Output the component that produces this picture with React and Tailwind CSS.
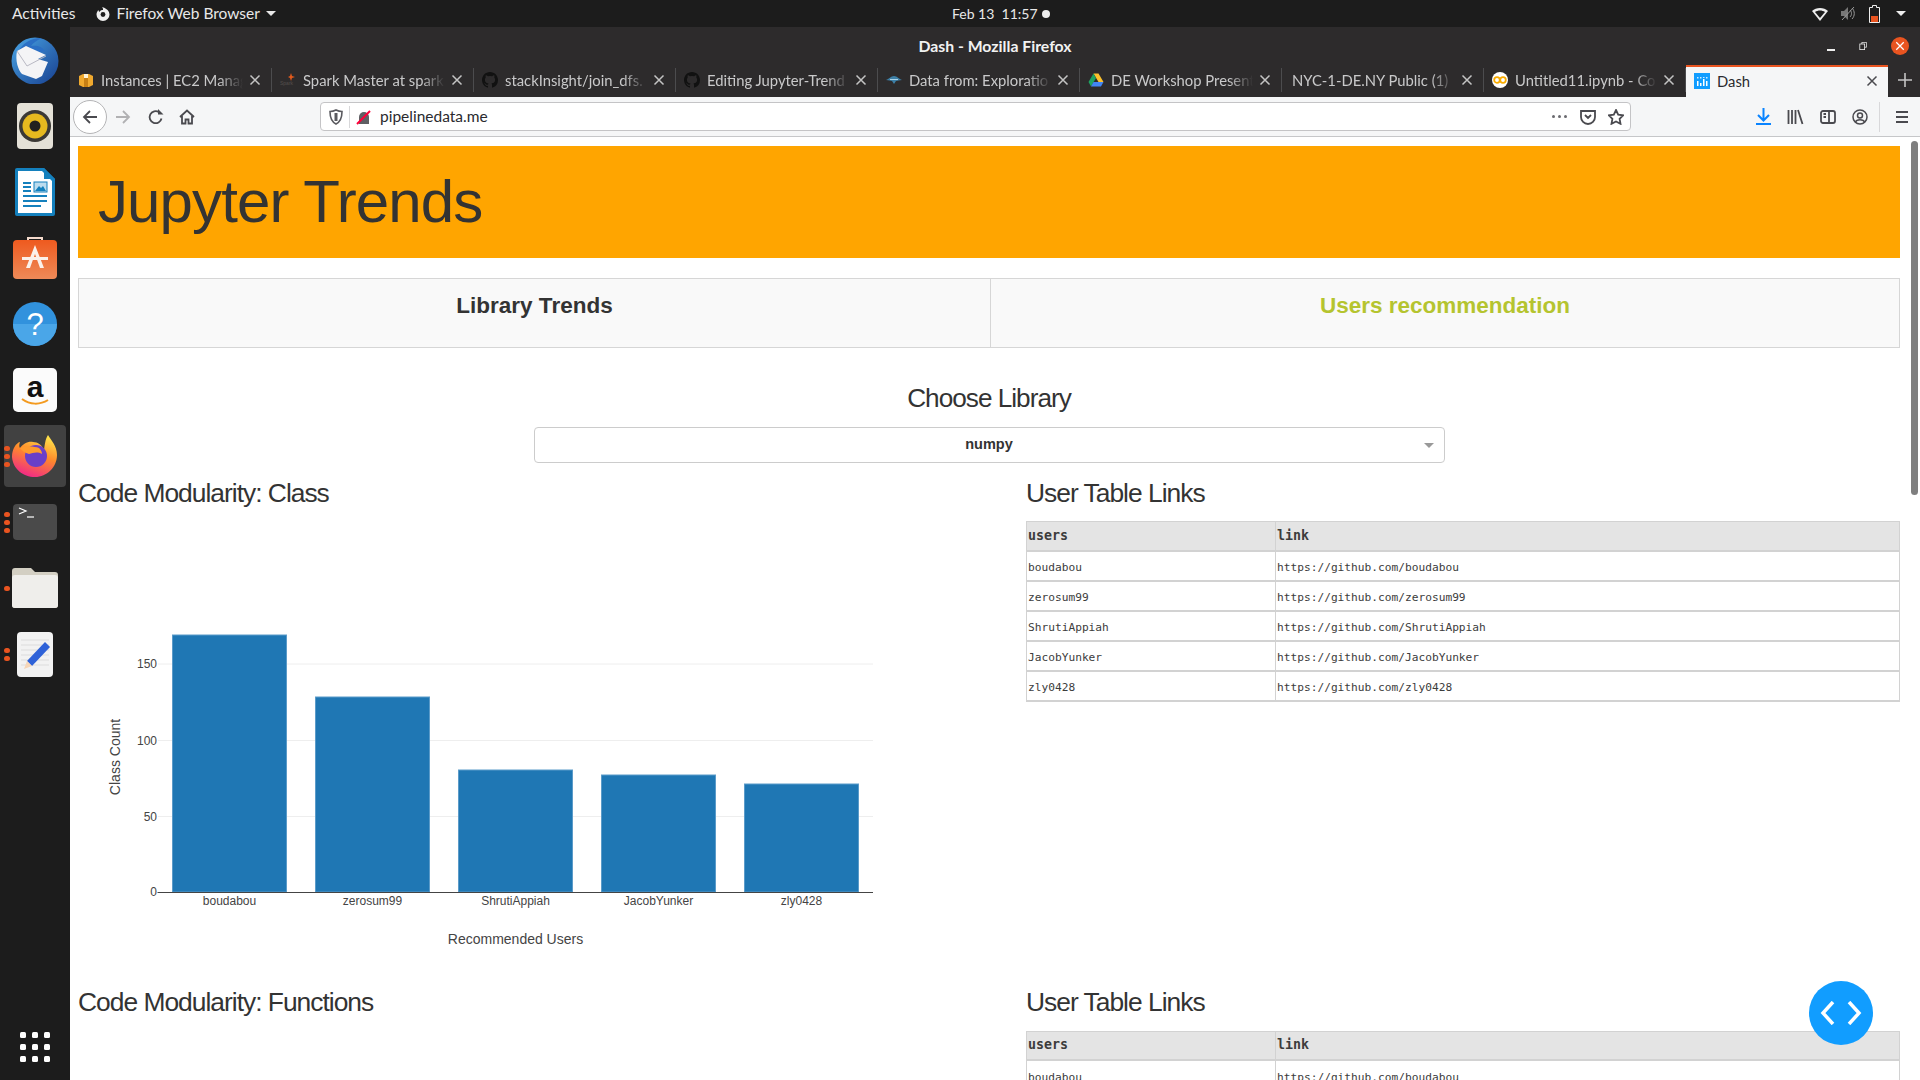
const tabs = [
  { title: 'Instances | EC2 Manag', icon: 'aws' },
  { title: 'Spark Master at spark', icon: 'spark' },
  { title: 'stackInsight/join_dfs.', icon: 'github' },
  { title: 'Editing Jupyter-Trend', icon: 'github' },
  { title: 'Data from: Exploratio', icon: 'manta' },
  { title: 'DE Workshop Present', icon: 'drive' },
  { title: 'NYC-1-DE.NY Public (1)', icon: null },
  { title: 'Untitled11.ipynb - Co', icon: 'colab' },
];

const users = ['boudabou', 'zerosum99', 'ShrutiAppiah', 'JacobYunker', 'zly0428'];

const bars = [
  { name: 'boudabou', x: 172, top: 635 },
  { name: 'zerosum99', x: 315, top: 697 },
  { name: 'ShrutiAppiah', x: 458, top: 770 },
  { name: 'JacobYunker', x: 601, top: 775 },
  { name: 'zly0428', x: 744, top: 784 },
];

function TabIcon({ type }) {
  if (type === 'aws') {
    return (
      <svg width="16" height="16" viewBox="0 0 16 16">
        <path d="M1 4 5 2h6l4 2v9l-4 2H5l-4-2z" fill="#f0a92e" />
        <path d="M6 2h4v4H6z" fill="#fff3d6" />
        <path d="M6 6h4v9H6z" fill="#c77f14" />
      </svg>
    );
  }
  if (type === 'spark') {
    return (
      <svg width="16" height="16" viewBox="0 0 16 16">
        <text x="0" y="13" fontSize="5" fontFamily="Liberation Sans" fill="#55504c">
          Spark
        </text>
        <path d="M11 1l1 3 3 1-3 1-1 3-1-3-2-1 2-1z" fill="#e25a1c" />
      </svg>
    );
  }
  if (type === 'github') {
    return (
      <svg width="16" height="16" viewBox="0 0 16 16">
        <path
          fill="#111"
          d="M8 0C3.58 0 0 3.58 0 8c0 3.54 2.29 6.53 5.47 7.59.4.07.55-.17.55-.38v-1.34c-2.22.48-2.69-1.07-2.69-1.07-.36-.92-.89-1.17-.89-1.17-.73-.5.05-.49.05-.49.8.06 1.23.82 1.23.82.71 1.22 1.87.87 2.33.66.07-.52.28-.87.5-1.07-1.77-.2-3.64-.89-3.64-3.95 0-.87.31-1.59.82-2.15-.08-.2-.36-1.02.08-2.12 0 0 .67-.21 2.2.82a7.6 7.6 0 0 1 4 0c1.53-1.04 2.2-.82 2.2-.82.44 1.1.16 1.92.08 2.12.51.56.82 1.27.82 2.15 0 3.07-1.87 3.75-3.65 3.95.29.25.54.73.54 1.48v2.2c0 .21.15.46.55.38A8.01 8.01 0 0 0 16 8c0-4.42-3.58-8-8-8z"
        />
      </svg>
    );
  }
  if (type === 'manta') {
    return (
      <svg width="16" height="16" viewBox="0 0 16 16">
        <path d="M0 8c3-1 5-4 8-4s5 3 8 4c-3 0-4 1-6 1l-2 3-2-3C4 9 3 8 0 8z" fill="#3d7fa6" />
        <path d="M4 7h8v1H4z" fill="#a9d3ea" />
      </svg>
    );
  }
  if (type === 'drive') {
    return (
      <svg width="16" height="16" viewBox="0 0 16 16">
        <path d="M5.500 1.500h5L15.500 10h-5z" fill="#fbc02d" />
        <path d="M5.500 1.500 0.500 10 3 14.500 8 6z" fill="#1ea362" />
        <path d="M3 14.500h10l2.500-4.500h-10z" fill="#4285f4" />
      </svg>
    );
  }
  if (type === 'colab') {
    return (
      <svg width="16" height="16" viewBox="0 0 16 16">
        <circle cx="8" cy="8" r="8" fill="#fff" />
        <circle cx="5" cy="8" r="2.800" fill="none" stroke="#f9ab00" strokeWidth="1.800" />
        <circle cx="11" cy="8" r="2.800" fill="none" stroke="#f9ab00" strokeWidth="1.800" />
      </svg>
    );
  }
  return (
    <svg width="16" height="16" viewBox="0 0 16 16">
      <rect width="16" height="16" fill="#119dff" />
      <path d="M3 8h1.500v5H3zM6 10h1.500v3H6zM9 6h1.500v7H9zM12 8h1.500v5H12z" fill="#fff" />
      <path d="M3 4h1.500v1.500H3zM6 4h1.500v1.500H6zM9 4h1.500v1H9zM12 4h1.500v1.500H12z" fill="#cfeaff" />
    </svg>
  );
}

function CloseX({ className = 'stroke-[#c4c4c4]' }) {
  return (
    <svg width="12" height="12" viewBox="0 0 12 12" className={className} strokeWidth="1.500" fill="none">
      <path d="M1.500 1.500l9 9M10.500 1.500l-9 9" />
    </svg>
  );
}

function BrowserTab({ title, icon }) {
  return (
    <div className="flex h-[24px] w-[202px] shrink-0 items-center border-r border-[#4c4c4e] pl-[8px] pr-[10px]">
      {icon ? (
        <span className="mr-[7px] flex w-[16px] shrink-0 items-center justify-center">
          <TabIcon type={icon} />
        </span>
      ) : (
        <span className="w-[2px] shrink-0" />
      )}
      <span className="flex-1 overflow-hidden whitespace-nowrap text-[14.800px] text-[#c9c9ca] [mask-image:linear-gradient(to_left,transparent,black_24px)]">
        {title}
      </span>
      <span className="ml-[6px]">
        <CloseX />
      </span>
    </div>
  );
}

function DockItem({ children, active, dots = 0 }) {
  return (
    <div className="relative flex h-[66px] shrink-0 items-center justify-center">
      {active ? <span className="absolute inset-x-[4px] inset-y-[2px] rounded-[4px] bg-[#414141]" /> : null}
      {dots > 0 ? (
        <span className="absolute left-[4px] flex flex-col gap-[3px]">
          {Array.from({ length: dots }).map((_, i) => (
            <span className="h-[5px] w-[6px] rounded-full bg-[#e95420]" key={i} />
          ))}
        </span>
      ) : null}
      <span className="relative flex">{children}</span>
    </div>
  );
}

function Dock() {
  return (
    <aside className="flex w-[70px] shrink-0 flex-col bg-[#1c1c1c]">
      <DockItem>
        <svg width="50" height="48" viewBox="0 0 50 48">
          <defs>
            <linearGradient id="tb" x1="0" y1="0" x2="1" y2="1">
              <stop offset="0" stopColor="#4aa6e6" />
              <stop offset="1" stopColor="#173f8f" />
            </linearGradient>
          </defs>
          <circle cx="25" cy="25" r="23.500" fill="url(#tb)" />
          <path d="M8 16c4-8 12-14 24-14-5 2-9 5-11 8 5-1 11 0 14 5L12 20z" fill="#2b6fc4" />
          <path d="M7 15l9-5 20 9-8 4 10 3-6 14-6 3-14-5C8 34 5 24 7 15z" fill="#f4f4f6" />
          <path d="M7 15l10 15 19-10" fill="none" stroke="#b9b9c4" strokeWidth="1" />
        </svg>
      </DockItem>
      <DockItem>
        <svg width="36" height="46" viewBox="0 0 36 46">
          <rect width="36" height="46" rx="4" fill="#e4e1d7" />
          <circle cx="18" cy="23" r="16" fill="#3b3935" />
          <circle cx="18" cy="23" r="12.500" fill="#e6b91f" />
          <circle cx="18" cy="23" r="5.500" fill="#22211f" />
        </svg>
      </DockItem>
      <DockItem>
        <svg width="40" height="48" viewBox="0 0 40 48">
          <path d="M2 0h27l11 11v35a2 2 0 0 1-2 2H2a2 2 0 0 1-2-2V2a2 2 0 0 1 2-2z" fill="#1480bd" />
          <path d="M3 3h24l10 10v32H3z" fill="#fff" />
          <path d="M29 0l11 11H29z" fill="#1480bd" />
          <path d="M8 14h8v2H8zM8 18h8v2H8zM8 22h8v2H8zM8 27h24v2H8zM8 32h24v2H8zM8 37h18v2H8z" fill="#1480bd" />
          <rect x="19" y="14" width="13" height="10" fill="#bcdcee" stroke="#1480bd" />
          <path d="M20 23l4-5 2 2 2-2 3 5z" fill="#1480bd" />
        </svg>
      </DockItem>
      <DockItem>
        <svg width="44" height="44" viewBox="0 0 44 44">
          <defs>
            <linearGradient id="sw" x1="0" y1="0" x2="0" y2="1">
              <stop offset="0" stopColor="#ee5a1f" />
              <stop offset="1" stopColor="#ee8a58" />
            </linearGradient>
          </defs>
          <path d="M15 6V2h14v4" fill="none" stroke="#f3d9cb" strokeWidth="2" />
          <rect y="4" width="44" height="39" rx="4" fill="url(#sw)" />
          <path d="M22 9l9 23h-4l-5-14-5 14h-4z" fill="#fbf1ea" />
          <path d="M9 21h26v3H9z" fill="#fbf1ea" />
        </svg>
      </DockItem>
      <DockItem>
        <svg width="44" height="44" viewBox="0 0 44 44">
          <circle cx="22" cy="22" r="22" fill="#3192dd" />
          <path d="M0 22a22 22 0 0 0 44 0z" fill="#4aa6e8" />
          <text x="22" y="33" textAnchor="middle" fontSize="31" fontFamily="Liberation Sans" fill="#fff">
            ?
          </text>
        </svg>
      </DockItem>
      <DockItem>
        <svg width="44" height="44" viewBox="0 0 44 44">
          <rect width="44" height="44" rx="5" fill="#fbfbfb" />
          <text x="22" y="29" textAnchor="middle" fontSize="30" fontWeight="700" fontFamily="Liberation Sans" fill="#111">
            a
          </text>
          <path d="M9 31c8 6 18 6 26 1" fill="none" stroke="#f39a1f" strokeWidth="2" />
        </svg>
      </DockItem>
      <DockItem active dots={3}>
        <svg width="46" height="44" viewBox="0 0 46 44">
          <defs>
            <linearGradient id="ff" x1="0.7" y1="0" x2="0.3" y2="1">
              <stop offset="0" stopColor="#ffe34a" />
              <stop offset="0.45" stopColor="#ff8a2b" />
              <stop offset="1" stopColor="#f0258a" />
            </linearGradient>
          </defs>
          <path d="M36 1c3 5 9 11 9 20 0 12-10 22-22 22S1 35 0 23C0 15 4 9 8 8c-1 3-1 5 0 6 3-4 8-7 13-6 5 0 9 3 11 8 1-6 1-10 4-15z" fill="url(#ff)" />
          <circle cx="24" cy="22" r="11" fill="#6a3fc9" />
          <path d="M8 14c5-2 14-2 19 0 2 2 3 4 3 6-5-3-9-1-13 0-4-1-7-3-9-6z" fill="#ff9b2e" />
        </svg>
      </DockItem>
      <DockItem dots={3}>
        <svg width="44" height="36" viewBox="0 0 44 36">
          <rect width="44" height="36" rx="4" fill="#4a4a4a" />
          <path d="M6 4l7 3-7 3" fill="none" stroke="#fff" strokeWidth="1.200" />
          <path d="M14 13h7" stroke="#fff" strokeWidth="1.200" />
        </svg>
      </DockItem>
      <DockItem dots={1}>
        <svg width="46" height="40" viewBox="0 0 46 40">
          <path d="M3 0h16l4 4h20a3 3 0 0 1 3 3v30a3 3 0 0 1-3 3H3a3 3 0 0 1-3-3V3a3 3 0 0 1 3-3z" fill="#d3cfc3" />
          <path d="M3 7h40a3 3 0 0 1 3 3v27a3 3 0 0 1-3 3H3a3 3 0 0 1-3-3V10a3 3 0 0 1 3-3z" fill="#efeeeb" />
        </svg>
      </DockItem>
      <DockItem dots={2}>
        <svg width="36" height="45" viewBox="0 0 36 45">
          <rect width="36" height="45" rx="4" fill="#f2f2f2" />
          <path d="M4 8h28M4 13h28M4 18h28M4 23h28M4 28h28M4 33h28" stroke="#dcdcdc" />
          <path d="M10 29 28 10l5 5-18 19z" fill="#2f62d8" />
          <path d="M10 29l5 5-8 3z" fill="#f6d6b8" />
        </svg>
      </DockItem>
      <div className="mt-auto mb-[18px] grid grid-cols-3 gap-[6px] self-center">
        {Array.from({ length: 9 }).map((_, i) => (
          <span className="h-[6px] w-[6px] rounded-[1.500px] bg-white" key={i} />
        ))}
      </div>
    </aside>
  );
}

function TopBar() {
  return (
    <header className="relative flex h-[27px] shrink-0 items-center justify-between bg-[#1c1c1c] pl-[12px] pr-[12px] text-[15.500px] text-[#e8e8e8]">
      <div className="flex items-center">
        <span>Activities</span>
        <svg className="ml-[20px]" width="16" height="16" viewBox="0 0 16 16">
          <path d="M8 2a6.500 6.500 0 1 1-6.500 6.500c0-2 1-3.500 2-4.500 0 1 .5 1.500 1 2 .5-1.500 2-2 3.500-2 0-1 0-2-1-3 2 .5 4 1 4 3" fill="#eee" />
          <circle cx="8" cy="8.500" r="2.400" fill="#1c1c1c" />
        </svg>
        <span className="ml-[5px]">Firefox Web Browser</span>
        <span className="ml-[6px] h-0 w-0 border-x-[5px] border-t-[5px] border-x-transparent border-t-[#e8e8e8]" />
      </div>
      <div className="absolute left-[952px] flex items-center text-[14px]">
        <span>Feb 13&nbsp;&nbsp;11:57</span>
        <span className="ml-[4px] h-[8px] w-[8px] rounded-full bg-[#eee]" />
      </div>
      <div className="mr-[2px] flex items-center gap-[13px]">
        <svg width="16" height="14" viewBox="0 0 16 14">
          <path d="M0 4c4-4 12-4 16 0L8 14z" fill="#eee" />
          <path d="M3 5c3-2 7-2 10 0L8 11z" fill="#1c1c1c" />
        </svg>
        <svg width="15" height="15" viewBox="0 0 15 15">
          <path d="M0 5h3l4-4v13l-4-4H0z" fill="#777" />
          <path d="M9 4c2 2 2 5 0 7M11 2c3 3 3 8 0 11" fill="none" stroke="#999" />
          <path d="M1 14 13 1" stroke="#999" />
        </svg>
        <svg width="11" height="18" viewBox="0 0 11 18">
          <path d="M3.500 .5h4v2h3v15H.5V2.500h3z" fill="none" stroke="#eee" />
          <rect x="2" y="11" width="7" height="6" fill="#e95420" />
        </svg>
        <span className="ml-[3px] h-0 w-0 border-x-[5px] border-t-[5px] border-x-transparent border-t-[#eee]" />
      </div>
    </header>
  );
}

function TitleBar() {
  return (
    <div className="relative flex h-[38px] shrink-0 items-center justify-center bg-[#2d2b2c]">
      <span className="text-[15.800px] font-bold text-[#f2f2f2]">Dash - Mozilla Firefox</span>
      <div className="absolute right-[11px] flex items-center gap-[24px]">
        <span className="h-[1.500px] w-[8px] translate-y-[4px] bg-[#eee]" />
        <svg width="8" height="8" viewBox="0 0 10 10" fill="none" stroke="#eee">
          <path d="M3.500 2.500V.5h6v6h-2" />
          <rect x="1" y="2.500" width="6" height="7" />
        </svg>
        <span className="flex h-[18px] w-[18px] items-center justify-center rounded-full bg-[#e95420]">
          <CloseX className="h-[10px] w-[10px] stroke-white" />
        </span>
      </div>
    </div>
  );
}

function TabStrip() {
  return (
    <div className="flex h-[32px] shrink-0 items-center bg-[#2d2b2c] pb-[2px]">
      {tabs.map((tab) => (
        <BrowserTab icon={tab.icon} key={tab.title} title={tab.title} />
      ))}
      <div className="-mb-[2px] flex h-[32px] w-[202px] shrink-0 items-center border-t-2 border-[#e95420] bg-[#f5f6f7] pb-[2px] pl-[8px] pr-[10px] text-[14.800px] text-[#2a2a2e]">
        <TabIcon type="dash" />
        <span className="ml-[7px] flex-1">Dash</span>
        <CloseX className="stroke-[#4a4a4f]" />
      </div>
      <svg className="ml-[10px]" width="14" height="14" viewBox="0 0 14 14" stroke="#c4c4c4" strokeWidth="1.600">
        <path d="M7 0v14M0 7h14" />
      </svg>
    </div>
  );
}

function Toolbar() {
  const stroke = { fill: 'none', stroke: '#4a4a4f', strokeWidth: 1.8 };
  return (
    <div className="flex h-[40px] shrink-0 items-center border-b border-[#c6c7c9] bg-[#f5f6f7]">
      <div className="ml-[3px] flex h-[34px] w-[34px] items-center justify-center rounded-full border border-[#b4b4b6] bg-white">
        <svg width="16" height="16" viewBox="0 0 16 16" {...stroke}>
          <path d="M15 8H2M8 2 2 8l6 6" />
        </svg>
      </div>
      <svg className="ml-[8px]" width="16" height="16" viewBox="0 0 16 16" fill="none" stroke="#b1b1b3" strokeWidth="1.800">
        <path d="M1 8h13M8 2l6 6-6 6" />
      </svg>
      <svg className="ml-[17px]" width="16" height="16" viewBox="0 0 16 16" {...stroke}>
        <path d="M13.500 9.500A6 6 0 1 1 11 3.200" />
        <path d="M10 0v5.500h5.500z" fill="#4a4a4f" stroke="none" />
      </svg>
      <svg className="ml-[15px]" width="16" height="16" viewBox="0 0 16 16" {...stroke}>
        <path d="M1 8l7-6.500L15 8M3 7v7.500h3.500v-4h3v4H13V7" />
      </svg>
      <div className="ml-[125px] flex h-[29px] w-[1311px] items-center rounded-[4px] border border-[#c4c4c6] bg-white">
        <svg className="ml-[8px]" width="14" height="16" viewBox="0 0 14 16" fill="none" stroke="#5a5a5f" strokeWidth="1.600">
          <path d="M7 1c2 1 4 1.500 6 1.500 0 6-2 10.500-6 12.500C3 13 1 8.500 1 2.500 3 2.500 5 2 7 1z" />
          <path d="M7 4v8" strokeWidth="3" />
        </svg>
        <span className="ml-[6px] h-[22px] w-px bg-[#d8d8da]" />
        <svg className="ml-[6px]" width="16" height="16" viewBox="0 0 16 16">
          <path d="M3 8a5 5 0 0 1 10 0v7H3z" fill="#5f5f63" />
          <path d="M1 15 14 2" stroke="#ff0039" strokeWidth="2" />
        </svg>
        <span className="ml-[8px] flex-1 pt-[1px] text-[15.500px] text-[#2a2a2e]">pipelinedata.me</span>
        <span className="flex gap-[2.500px]">
          <span className="h-[3.500px] w-[3.500px] rounded-full bg-[#6a6a6f]" />
          <span className="h-[3.500px] w-[3.500px] rounded-full bg-[#6a6a6f]" />
          <span className="h-[3.500px] w-[3.500px] rounded-full bg-[#6a6a6f]" />
        </span>
        <svg className="ml-[13px]" width="16" height="16" viewBox="0 0 16 16" {...stroke}>
          <path d="M1 2h14v6a7 7 0 0 1-14 0zM5 6l3 3 3-3" />
        </svg>
        <svg className="ml-[12px] mr-[6px]" width="16" height="16" viewBox="0 0 16 16" {...stroke}>
          <path d="M8 1l2.200 4.600 5 .7-3.600 3.500.9 5L8 12.400 3.500 14.800l.9-5L.8 6.300l5-.7z" />
        </svg>
      </div>
      <svg className="ml-[125px]" width="15" height="17" viewBox="0 0 15 17" fill="none" stroke="#0a84ff" strokeWidth="2">
        <path d="M7.500 0v12M2 7l5.500 5.500L13 7M0 16h15" />
      </svg>
      <svg className="ml-[16px]" width="17" height="16" viewBox="0 0 17 16" fill="none" stroke="#4a4a4f" strokeWidth="1.800">
        <path d="M1.500 1v14M5 1v14M8.500 1v14M11 1l4.500 14" />
      </svg>
      <svg className="ml-[16px]" width="16" height="16" viewBox="0 0 16 16" fill="none" stroke="#4a4a4f" strokeWidth="1.800">
        <rect x="1" y="2" width="14" height="12" rx="2" />
        <path d="M9 2v12M3.500 5H6M3.500 8H6" />
      </svg>
      <svg className="ml-[16px]" width="16" height="16" viewBox="0 0 16 16" fill="none" stroke="#4a4a4f" strokeWidth="1.500">
        <circle cx="8" cy="8" r="7" />
        <circle cx="8" cy="6.500" r="2.500" />
        <path d="M3.500 13c1-3 8-3 9 0" />
      </svg>
      <span className="ml-[11px] h-[30px] w-px bg-[#d8d8da]" />
      <svg className="ml-[15px]" width="14" height="14" viewBox="0 0 14 14" stroke="#4a4a4f" strokeWidth="2">
        <path d="M1 2h12M1 7h12M1 12h12" />
      </svg>
    </div>
  );
}

function BarChart() {
  return (
    <svg className="mt-[12px] block" width="800" height="440" viewBox="78 520 800 440" fontFamily="Liberation Sans">
      {[664, 740.5, 816.5].map((y) => (
        <path d={`M158 ${y}H873`} stroke="#eeeeee" key={y} />
      ))}
      {bars.map((bar) => (
        <g key={bar.name}>
          <rect x={bar.x + 0.5} y={bar.top} width="114" height={892 - bar.top} fill="#1f77b4" stroke="#5b9bc9" />
          <text x={bar.x + 57.5} y="905" textAnchor="middle" fontSize="12" fill="#444">
            {bar.name}
          </text>
        </g>
      ))}
      <path d="M157.500 892.500H873" stroke="#444" />
      {[
        ['150', 664],
        ['100', 740.5],
        ['50', 816.5],
        ['0', 892],
      ].map(([label, y]) => (
        <text x="157" y={y + 4} textAnchor="end" fontSize="12" fill="#444" key={label}>
          {label}
        </text>
      ))}
      <text x="515.500" y="944" textAnchor="middle" fontSize="14" fill="#444">
        Recommended Users
      </text>
      <text transform="translate(120 757) rotate(-90)" textAnchor="middle" fontSize="14" fill="#444">
        Class Count
      </text>
    </svg>
  );
}

function UserTable({ rows }) {
  return (
    <table className="w-full table-fixed border-collapse font-['DejaVu_Sans_Mono',monospace] text-[#3c3c3c]">
      <thead>
        <tr className="h-[29px] bg-[#e4e4e4] text-left text-[13.300px]">
          <th className="w-[249px] border border-b-2 border-[#d2d2d2] px-[1px] font-bold">users</th>
          <th className="border border-b-2 border-[#d2d2d2] px-[1px] font-bold">link</th>
        </tr>
      </thead>
      <tbody>
        {rows.map((user) => (
          <tr className="h-[30px] text-[11.200px]" key={user}>
            <td className="border border-b-2 border-[#d2d2d2] px-[1px] pt-[6px]">{user}</td>
            <td className="border border-b-2 border-[#d2d2d2] px-[1px] pt-[6px]">https://github.com/{user}</td>
          </tr>
        ))}
      </tbody>
    </table>
  );
}

function SectionHeading({ children }) {
  return <h3 className="h-[29px] text-[26.400px] leading-[29px] tracking-[-1px] text-[#333]">{children}</h3>;
}

function DashPage() {
  return (
    <main className="min-w-0 flex-1 overflow-hidden bg-white pl-[8px] pr-[2px] pt-[9px] font-['Liberation_Sans',sans-serif] text-[#333]">
      <div className="flex h-[112px] items-center bg-[#ffa500] pl-[20px]">
        <h1 className="text-[60px] leading-none tracking-[-0.900px]">Jupyter Trends</h1>
      </div>
      <div className="mt-[20px] grid h-[70px] grid-cols-[912px_1fr] border border-[#d6d6d6] bg-[#f9f9f9]">
        <div className="border-r border-[#d6d6d6] pt-[10px] text-center text-[22.500px] font-bold">Library Trends</div>
        <div className="pt-[10px] text-center text-[22.500px] font-bold text-[#b5c42f]">Users recommendation</div>
      </div>
      <h3 className="mt-[34px] text-center text-[26.200px] leading-[32px] tracking-[-1px]">Choose Library</h3>
      <div className="relative mx-auto mt-[13px] flex h-[36px] w-[911px] items-center justify-center rounded-[4px] border border-[#ccc] text-[14.500px] font-bold">
        numpy
        <span className="absolute right-[10px] h-0 w-0 border-x-[5px] border-t-[5px] border-x-transparent border-t-[#999]" />
      </div>
      <div className="mt-[16px] grid grid-cols-[948px_1fr]">
        <div>
          <SectionHeading>Code Modularity: Class</SectionHeading>
          <BarChart />
          <div className="mt-[28px]">
            <SectionHeading>Code Modularity: Functions</SectionHeading>
          </div>
        </div>
        <div>
          <SectionHeading>User Table Links</SectionHeading>
          <div className="mt-[13px]">
            <UserTable rows={users} />
          </div>
          <div className="mt-[286px]">
            <SectionHeading>User Table Links</SectionHeading>
          </div>
          <div className="mt-[14px]">
            <UserTable rows={users} />
          </div>
        </div>
      </div>
    </main>
  );
}

export default function App() {
  return (
    <div className="flex h-screen flex-col overflow-hidden bg-[#1c1c1c] font-['Lato',sans-serif]">
      <TopBar />
      <div className="flex min-h-0 flex-1">
        <Dock />
        <div className="flex min-w-0 flex-1 flex-col">
          <TitleBar />
          <TabStrip />
          <Toolbar />
          <div className="relative flex min-h-0 flex-1">
            <DashPage />
            <div className="w-[18px] shrink-0 bg-white pl-[9px] pt-[4px]">
              <div className="h-[354px] w-[7px] rounded-full bg-[#7f7f7f]" />
            </div>
            <button
              className="absolute bottom-[35px] right-[47px] flex h-[64px] w-[64px] items-center justify-center rounded-full bg-[#119dff]"
              type="button"
            >
              <svg width="42" height="24" viewBox="0 0 42 24" fill="none" stroke="#fff" strokeWidth="3.500">
                <path d="M13 1 3 12l10 11M29 1l10 11-10 11" />
              </svg>
            </button>
          </div>
        </div>
      </div>
    </div>
  );
}
